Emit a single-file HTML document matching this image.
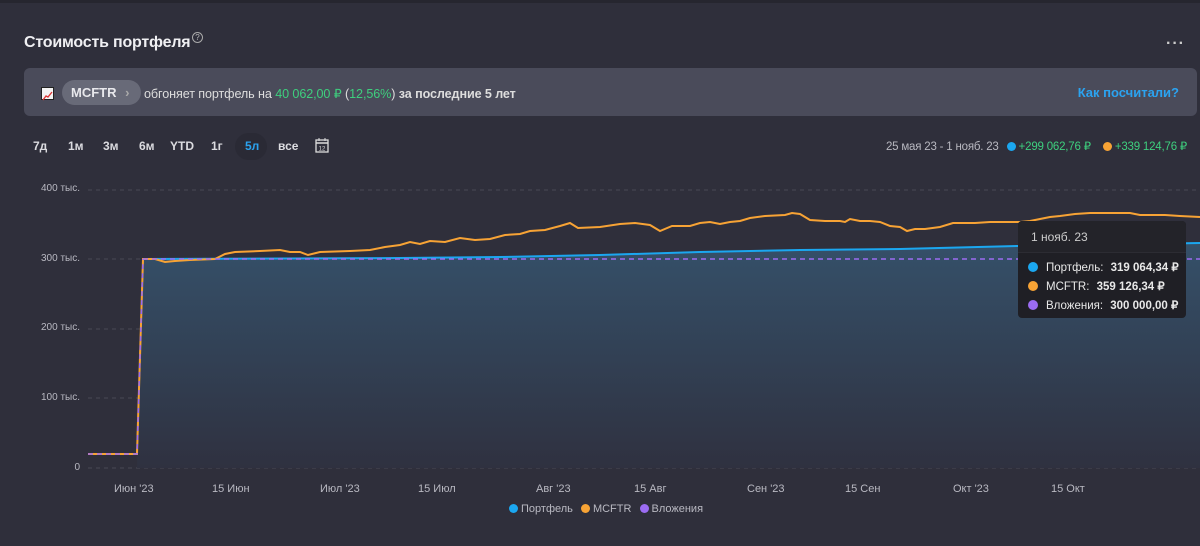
<!DOCTYPE html>
<html><head><meta charset="utf-8"><style>
*{margin:0;padding:0;box-sizing:border-box}
body{width:1200px;height:546px;background:#2f2f3b;font-family:"Liberation Sans",sans-serif;color:#e6e6ea;position:relative;overflow:hidden}
.top{position:absolute;left:0;top:0;width:1200px;height:3px;background:#26262f}
.title{position:absolute;left:24px;top:34px;font-size:16px;font-weight:bold;color:#f0f0f3;letter-spacing:-0.2px}
.q{position:absolute;left:192px;top:32px;width:11px;height:11px;border:1px solid #aaa;border-radius:50%;font-size:8px;text-align:center;line-height:9px;color:#bbb}
.dots{position:absolute;left:1166px;top:35px;font-size:16px;letter-spacing:1px;color:#ccc;font-weight:bold}
.banner{position:absolute;left:24px;top:68px;width:1173px;height:48px;background:#4a4b5a;border-radius:6px}
.icn{position:absolute;left:17px;top:19px;width:13px;height:13px;background:#f3f3f3;border:1px solid #222}
.pill{position:absolute;left:38px;top:12px;width:79px;height:25px;border-radius:13px;background:#686a78;font-size:13px;font-weight:bold;line-height:25px;padding-left:9px;color:#e8e8ec}
.btxt{position:absolute;left:120px;top:18px;font-size:12.6px;color:#ddd;letter-spacing:-0.1px}
.g{color:#3ecf7e}
.how{position:absolute;right:18px;top:17px;font-size:13px;font-weight:bold;color:#2ba3f0}
.per{position:absolute;top:139px;font-size:12px;font-weight:bold;color:#dcdce0}
.sel{position:absolute;left:235px;top:133px;width:32px;height:27px;border-radius:14px;background:#2a2a35}
.rng{position:absolute;right:13px;top:139px;font-size:11.5px;color:#b8b8c0;letter-spacing:-0.2px}
.dot{display:inline-block;width:9px;height:9px;border-radius:50%;vertical-align:-1px;margin:0 3px 0 5px}
.yl{position:absolute;font-size:10px;color:#b9b9c2;text-align:right;width:50px;left:30px}
.xl{position:absolute;top:483px;font-size:11px;color:#b9b9c2}
.tip{position:absolute;left:1018px;top:221px;width:168px;height:97px;background:#1f1f25;border-radius:4px}
.tip .h{height:32px;border-bottom:1px solid #2c2c33;font-size:12px;color:#ccc;padding:9px 0 0 13px;background:#232329;border-radius:4px 4px 0 0}
.tip .r{font-size:11.5px;color:#e8e8e8;margin:8px 0 0 10px;height:11px}
.tip .r b{margin-left:4px}
.tip .dot{margin:0 8px 0 0;width:10px;height:10px}
.leg{position:absolute;top:503px;font-size:11px;color:#b9b9c2}
</style></head><body>
<div class="top"></div>
<div class="title">Стоимость портфеля</div><div class="q">?</div>
<div class="dots">···</div>
<div class="banner"><div class="icn"><svg width="11" height="11"><polyline points="1,10 4,6 6,7 10,2" fill="none" stroke="#d33" stroke-width="1.3"/></svg></div>
<div class="pill">MCFTR <span style="color:#aaa;margin-left:5px">›</span></div>
<div class="btxt">обгоняет портфель на <span class="g">40 062,00 ₽</span> (<span class="g">12,56%</span>) <b>за последние 5 лет</b></div>
<div class="how">Как посчитали?</div></div>
<div class="sel"></div>
<div class="per" style="left:33px">7д</div><div class="per" style="left:68px">1м</div><div class="per" style="left:103px">3м</div><div class="per" style="left:139px">6м</div><div class="per" style="left:170px">YTD</div><div class="per" style="left:211px">1г</div><div class="per" style="left:245px;color:#2ba3f0">5л</div><div class="per" style="left:278px">все</div>
<svg style="position:absolute;left:315px;top:138px" width="14" height="15"><rect x="1" y="2" width="12" height="12" fill="none" stroke="#ddd" stroke-width="1.3"/><line x1="1" y1="5" x2="13" y2="5" stroke="#ddd" stroke-width="1.5"/><line x1="4" y1="0" x2="4" y2="3" stroke="#ddd"/><line x1="10" y1="0" x2="10" y2="3" stroke="#ddd"/><text x="7" y="12.5" font-size="6" fill="#ddd" text-anchor="middle" font-family="Liberation Sans">12</text></svg>
<div class="rng">25 мая 23 - 1 нояб. 23 <span class="dot" style="background:#1ba7f0"></span><span class="g">+299 062,76 ₽</span> <span class="dot" style="background:#f7a335;margin-left:9px"></span><span class="g">+339 124,76 ₽</span></div>
<div class="yl" style="top:183px">400 тыс.</div><div class="yl" style="top:253px">300 тыс.</div><div class="yl" style="top:322px">200 тыс.</div><div class="yl" style="top:392px">100 тыс.</div><div class="yl" style="top:462px">0</div>
<svg style="position:absolute;left:0;top:0" width="1200" height="546">
<defs><linearGradient id="f" x1="0" y1="0" x2="0" y2="1"><stop offset="0" stop-color="#355069"/><stop offset="1" stop-color="#2f3140"/></linearGradient></defs>
<g stroke="#4a4a56" stroke-dasharray="4,4" stroke-width="1"><line x1="88" y1="190" x2="1200" y2="190"/><line x1="88" y1="259" x2="143" y2="259"/><line x1="88" y1="329" x2="1200" y2="329"/><line x1="88" y1="398" x2="1200" y2="398"/><line x1="88" y1="468" x2="1200" y2="468"/></g>
<polygon fill="url(#f)" points="143,259 500,257 700,252 800,250 900,249 1018,246 1200,243 1200,468 137,468 143,259"/>
<polyline fill="none" stroke="#1ba7f0" stroke-width="2" points="143,259 400,258 500,257 600,255 700,252 800,250 900,249 1018,246 1200,243"/>
<polyline fill="none" stroke="#f7a335" stroke-width="2" points="88,454 137,454 143,259 155,259 165,262 175,261 190,260 215,259 225,254 235,252 260,251 280,250 290,252 300,252 308,255 320,252 350,251 370,250 385,247 400,245 410,242 420,244 430,241 445,242 460,238 475,240 490,239 505,235 520,234 530,231 545,230 560,226 570,223 578,228 600,227 620,224 635,223 650,225 660,231 672,226 690,226 700,223 710,222 720,224 730,222 740,221 750,218 765,216 785,215 792,213 800,214 810,220 825,221 840,221 845,222 850,219 860,221 870,221 880,222 890,226 900,227 907,231 915,229 925,229 940,227 953,223 975,223 990,222 1000,222 1010,222 1020,222 1030,221 1045,218 1050,217 1060,216 1075,214 1090,213 1110,213 1130,213 1140,215 1165,215 1180,216 1200,217"/>
<line x1="143" y1="259" x2="1200" y2="259" stroke="#9b6cf2" stroke-width="1.5" stroke-dasharray="5,4"/>
<polyline fill="none" stroke="#9b6cf2" stroke-width="1.5" stroke-dasharray="5,4" points="88,454 137,454 143,259"/>
<polyline fill="none" stroke="#f7a335" stroke-width="1.5" stroke-dasharray="4,5" stroke-dashoffset="4" points="88,454 137,454 143,259"/>
</svg>
<div class="xl" style="left:114px">Июн '23</div><div class="xl" style="left:212px">15 Июн</div><div class="xl" style="left:320px">Июл '23</div><div class="xl" style="left:418px">15 Июл</div><div class="xl" style="left:536px">Авг '23</div><div class="xl" style="left:634px">15 Авг</div><div class="xl" style="left:747px">Сен '23</div><div class="xl" style="left:845px">15 Сен</div><div class="xl" style="left:953px">Окт '23</div><div class="xl" style="left:1051px">15 Окт</div>
<div class="tip"><div class="h">1 нояб. 23</div>
<div class="r" style="margin-top:7px"><span class="dot" style="background:#1ba7f0"></span>Портфель: <b>319 064,34 ₽</b></div>
<div class="r"><span class="dot" style="background:#f7a335"></span>MCFTR: <b>359 126,34 ₽</b></div>
<div class="r"><span class="dot" style="background:#9b6cf2"></span>Вложения: <b>300 000,00 ₽</b></div></div>
<div class="leg" style="left:509px"><span class="dot" style="background:#1ba7f0;margin:0 3px 0 0"></span>Портфель <span class="dot" style="background:#f7a335"></span>MCFTR <span class="dot" style="background:#9b6cf2"></span>Вложения</div>
</body></html>
